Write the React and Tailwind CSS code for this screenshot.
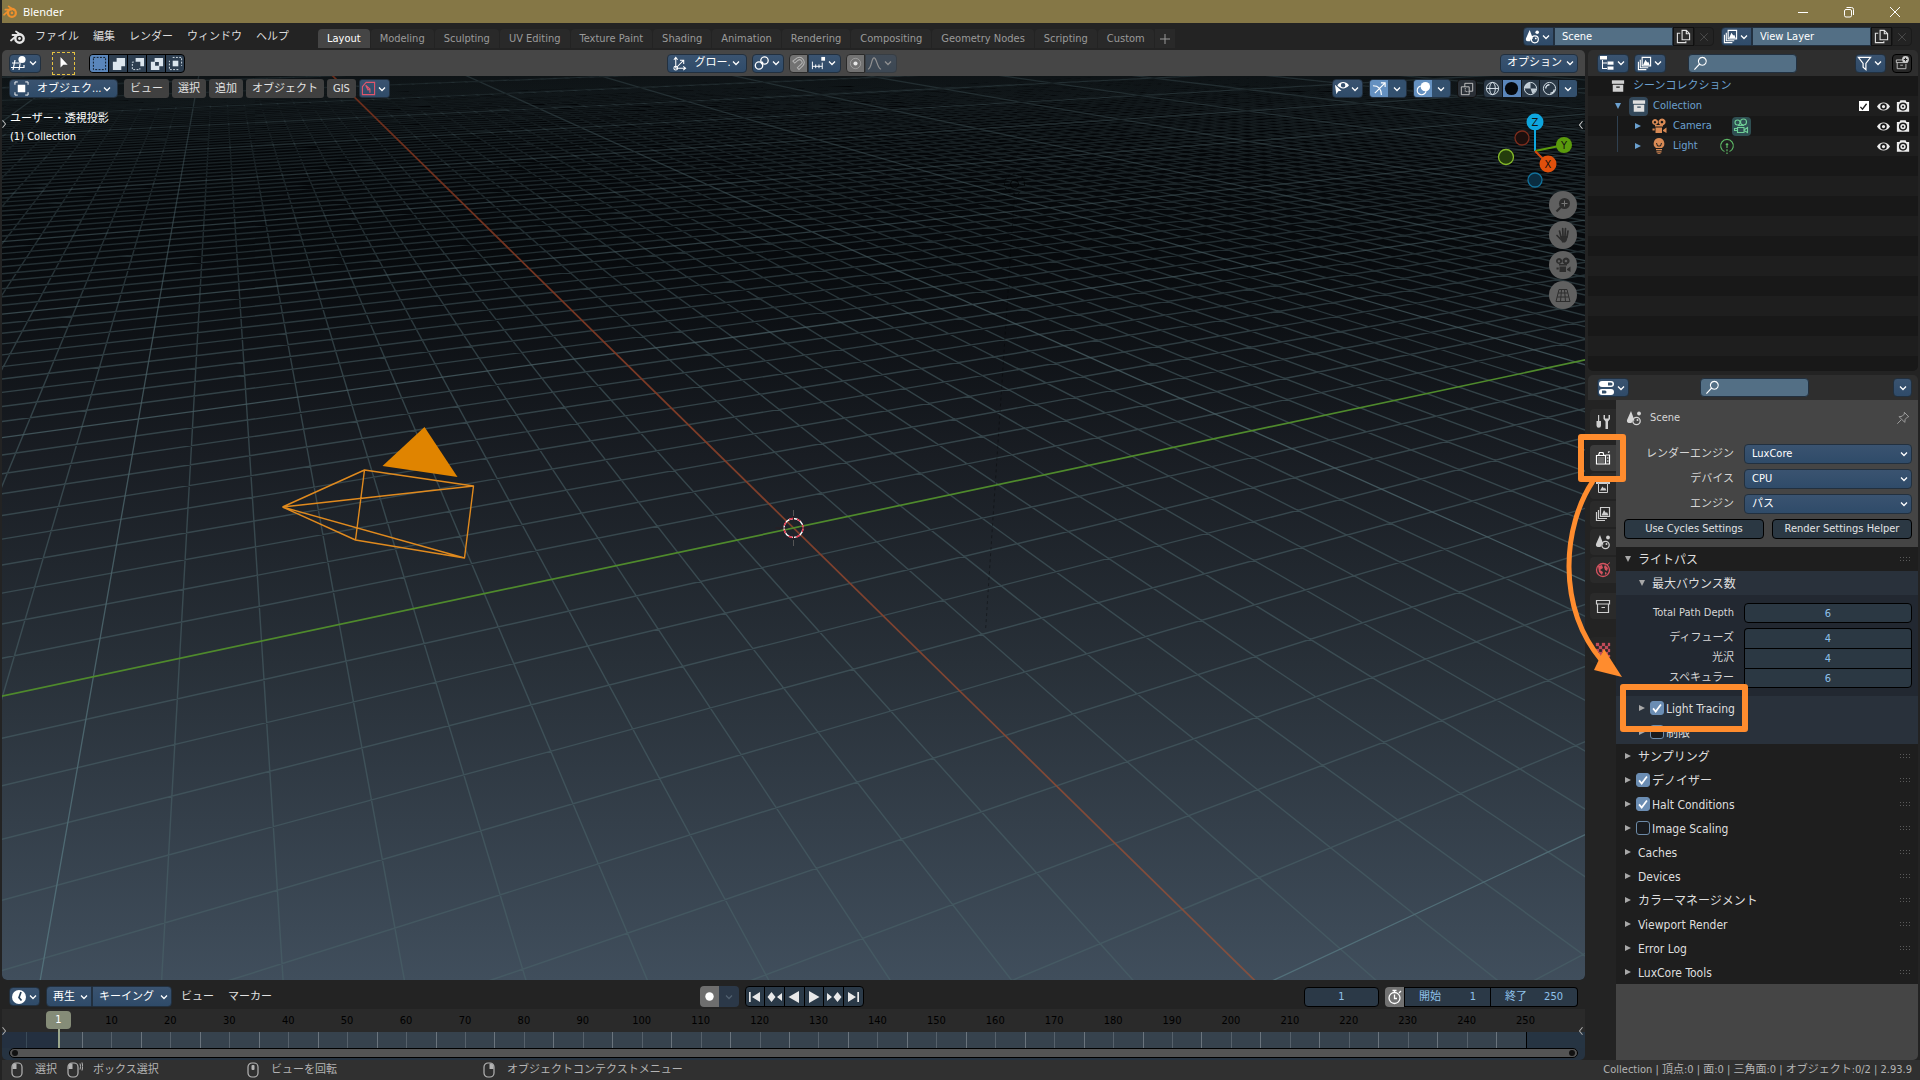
import React from 'react';
import clsx from 'clsx';

const W = 'currentColor';

// 16x16 icon drawings
const icons = {
  blender: (
    <g fill="none" stroke={W}>
      <circle cx="9.5" cy="9.5" r="4.2" strokeWidth="2.4" />
      <circle cx="9.5" cy="9.5" r="1.4" fill={W} stroke="none" />
      <path d="M1 11.5L8.5 5M2.5 6H9M6 2.5l6 4" strokeWidth="1.8" strokeLinecap="round" />
    </g>
  ),
  view3d: (
    <g fill="none" stroke={W}>
      <path d="M1 8h9M0 12.5h13M4 5L2 15M9 9l-1 6M13 10v3" strokeWidth="1.2" />
      <circle cx="11" cy="4.5" r="3.6" fill={W} stroke="none" />
    </g>
  ),
  cursor: <path d="M4 1v12l3.2-3h5z" fill={W} />,
  selNew: <rect x="1.5" y="1.5" width="13" height="13" fill="none" stroke="#0b1420" strokeDasharray="2 1.5" />,
  selAdd: <path d="M6 2h9v9h-4v4H2V6h4z" fill={W} />,
  selSub: (
    <g>
      <path d="M6 2h9v9h-4V6H6z" fill={W} />
      <path d="M4 6.5H2.5v8h8V13" fill="none" stroke={W} strokeDasharray="2 1.5" />
    </g>
  ),
  selDiff: <path fillRule="evenodd" d="M6 2h9v9h-4v4H2V6h4zM6.5 6.5v4h4v-4z" fill={W} />,
  selAnd: (
    <g>
      <rect x="5" y="5" width="6" height="6" fill={W} />
      <path d="M5 1.5h9.500v9M11 14.500H1.500V5" fill="none" stroke={W} strokeDasharray="2 1.5" />
    </g>
  ),
  orient: (
    <g fill="none" stroke={W} strokeWidth="1.1">
      <path d="M4 13V2M2 4l2-2.500L6 4M4 13h10M12 11l2.500 2-2.500 2M5 12l7-7M8.500 4.500H12.500V8.500" />
      <circle cx="4" cy="13" r="2" />
    </g>
  ),
  pivot: (
    <g fill="none" stroke={W} strokeWidth="1.3">
      <circle cx="5" cy="10.500" r="3.700" />
      <circle cx="10.500" cy="5.500" r="3.700" />
      <circle cx="8" cy="8" r="1.4" fill={W} stroke="none" />
    </g>
  ),
  magnet: (
    <path d="M2 5.500l4.500-3.500a5.300 5.300 0 0 1 6 8.500L8.500 14.500 6.800 12.500l3.800-3.500a2.600 2.600 0 0 0-3-4.500L4 7.500z" fill="none" stroke={W} strokeWidth="1.1" />
  ),
  snap: (
    <g>
      <path d="M1.500 6v8M5 9v4M8.500 9v4M12 7v7M1.500 11H12" stroke={W} fill="none" />
      <rect x="11" y="1" width="4" height="4" fill={W} />
    </g>
  ),
  dot: (
    <g>
      <circle cx="8" cy="8" r="5.500" fill="none" stroke={W} opacity=".35" />
      <circle cx="8" cy="8" r="2.200" fill={W} />
    </g>
  ),
  falloff: <path d="M1 14c4 0 3.500-12 6.500-12S11 14 15 14" fill="none" stroke={W} strokeWidth="1.3" />,
  object: (
    <g>
      <rect x="4" y="4" width="8" height="8" fill={W} />
      <path d="M1 4V1h3M12 1h3v3M15 12v3h-3M4 15H1v-3" fill="none" stroke={W} />
    </g>
  ),
  asset: (
    <g fill="none" stroke={W} strokeWidth="1.2">
      <path d="M1.500 6l4-4.500h9v13h-13z" />
      <path d="M5 4.500l4.500 4v4M5 4.500l2.500 5 2-1" />
    </g>
  ),
  visible: (
    <g>
      <path d="M1 4l7 6.500-3.500.3L2.500 14z" fill={W} />
      <path fillRule="evenodd" d="M3.500 4.500C7 0 12.500 0 16 4.500c-3.500 4.500-9 4.500-12.500 0zM9.700 2a2.400 2.400 0 1 0 0 4.800 2.400 2.400 0 0 0 0-4.800z" fill={W} />
    </g>
  ),
  gizmo: (
    <path d="M1 5c6 0 9 4 9 10M3 13L14 2M9.500 2H14v4.500" fill="none" stroke={W} strokeWidth="1.200" />
  ),
  overlay: (
    <g>
      <circle cx="6" cy="10" r="4.700" fill="none" stroke={W} strokeWidth="1.200" />
      <circle cx="10" cy="6" r="5" fill={W} />
    </g>
  ),
  xray: (
    <g fill="none" stroke={W}>
      <path d="M5.500 1.500h9v9M1.500 5.500h9v9h-9zM5.500 1.500v4M14.500 10.500h-4" />
      <path d="M6 7v4h4" strokeDasharray="1.500 1" />
    </g>
  ),
  wire: (
    <g fill="none" stroke={W}>
      <circle cx="8" cy="8" r="6.500" />
      <ellipse cx="8" cy="8" rx="3" ry="6.500" />
      <path d="M1.500 8h13" />
    </g>
  ),
  solid: <circle cx="8" cy="8" r="7" fill="#05080c" />,
  material: (
    <g>
      <circle cx="8" cy="8" r="6.500" fill="none" stroke={W} />
      <path d="M8 1.500V8H14a6 6 0 0 1-4 5.500L8 8 1.500 8A6.500 6.500 0 0 1 8 1.500z" fill={W} opacity=".85" />
    </g>
  ),
  rendered: (
    <g fill="none" stroke={W}>
      <circle cx="8" cy="8" r="6.500" />
      <path d="M4 8a4 4 0 0 1 4-4M9 13c2.500 0 4-2 4-4" strokeWidth="1.500" />
    </g>
  ),
  scene: (
    <g>
      <path d="M5 1l3.500 9.500H6.500L5.500 13H3a2.500 2.500 0 0 1-2-3z" fill={W} />
      <circle cx="10.500" cy="11" r="3.700" fill="none" stroke={W} strokeWidth="1.300" />
      <circle cx="13" cy="3.500" r="1.900" fill={W} />
      <circle cx="11.500" cy="10" r="1" fill={W} />
    </g>
  ),
  copy: <path d="M6.500 1.500H11l3.500 3.500v6.500h-8zM11 1.500V5h3.500M4.500 4.500h-3v10h9v-1.500" fill="none" stroke={W} strokeWidth="1.200" />,
  close: <path d="M3 3l10 10M13 3L3 13" stroke={W} fill="none" />,
  layers: (
    <g>
      <path d="M5.500 1.500h9v9h-9zM3.500 4v8.500H12M1.500 6v8.500H10" fill="none" stroke={W} strokeWidth="1.200" />
      <path d="M6.500 9.500L9 4l2 3 1-1 1.500 3.500z" fill={W} />
    </g>
  ),
  outliner: (
    <g fill={W}>
      <rect x="1" y="1" width="7" height="3.500" />
      <path d="M3 5h1v8h4v1H3zM3 7.500h5v1H3z" />
      <rect x="8.500" y="6.500" width="6" height="3.200" />
      <rect x="8.500" y="11.500" width="6" height="3.200" />
    </g>
  ),
  search: <path d="M10 1.500a4.200 4.200 0 1 1-.1 0zM6.800 8.800L1.500 14.500" fill="none" stroke={W} strokeWidth="1.200" />,
  filter: <path d="M1.500 1.500h13L9.500 8v6.500L6.500 12V8z" fill="none" stroke={W} strokeWidth="1.300" />,
  newCollection: (
    <g fill="none" stroke={W}>
      <path d="M8 4.500H1.500v3H14.500M2.500 7.500v7h10V9M6 10.500h3" />
      <circle cx="12" cy="4" r="3.900" fill={W} stroke="none" />
      <path d="M12 2v4M10 4h4" stroke="#222" strokeWidth="1.200" />
    </g>
  ),
  collection: (
    <g>
      <rect x="1" y="1.500" width="14" height="4" fill={W} />
      <path fillRule="evenodd" d="M2 6.500h12v8H2zM6 8.500v1.500h4V8.500z" fill={W} />
    </g>
  ),
  collectionLine: <path d="M1.500 2.500h13v3.500h-13zM2.500 6v8.500h11V6M6.500 9.500h3.500" fill="none" stroke={W} strokeWidth="1.200" />,
  camera: (
    <g fill={W}>
      <path fillRule="evenodd" d="M4 1a3 3 0 1 0 .1 0zM4 3a1.200 1.200 0 1 1-.1 0zM11 .5a3.500 3.500 0 1 0 .1 0zM11 2.700a1.300 1.300 0 1 1-.1 0z" />
      <path d="M4 7h8v1.500H4zM4.500 9.500H11V15H4.500zM12 12l3.500-2.500V15L12 13z" />
      <rect x="1.500" y="10.500" width="2.200" height="2" />
    </g>
  ),
  cameraLine: (
    <g fill="none" stroke={W} strokeWidth="1.100">
      <circle cx="4.500" cy="4.500" r="2.500" />
      <circle cx="10.500" cy="4" r="3" />
      <path d="M5 7.500h6M4.500 9.500H11v5H4.500zM11 12l3.500-2.500v5L11 12.500M1.500 10.500h3v2h-3z" />
    </g>
  ),
  bulb: (
    <g fill={W}>
      <path d="M8 0a5.500 5.500 0 0 0-3 10h6A5.500 5.500 0 0 0 8 0z" />
      <path d="M5 11h6v1.300H5zM5.500 13.200h5v1.300h-5zM6.500 15.200h3v.8h-3z" />
      <path d="M5.500 5l1 3h3l1-3" stroke="#222" fill="none" />
    </g>
  ),
  pointLight: (
    <g fill="none" stroke={W} strokeWidth="1.200">
      <path d="M5.500 13.500a6.300 6.300 0 1 1 5 0" />
      <circle cx="8" cy="6.500" r="1.300" fill={W} stroke="none" />
      <path d="M8 8v8" strokeDasharray="2 1.300" />
    </g>
  ),
  eye: <path fillRule="evenodd" d="M0 8c3.500-6.500 12.500-6.500 16 0-3.500 6.500-12.500 6.500-16 0zM8 4a4 4 0 1 0 0 8 4 4 0 0 0 0-8zM8 6a2 2 0 1 1 0 4 2 2 0 0 1 0-4z" fill={W} />,
  photo: (
    <g>
      <path fillRule="evenodd" d="M1 3.500h3L5 1.500h6l1 2h3v11H1zM8 4a4.700 4.700 0 1 0 0 9.400A4.700 4.700 0 0 0 8 4z" fill={W} />
      <circle cx="8" cy="8.700" r="3" fill={W} />
      <circle cx="8" cy="8.700" r="1.300" fill="#222" />
    </g>
  ),
  properties: (
    <g>
      <rect x="0" y="1" width="15" height="6" rx="3" fill={W} />
      <rect x="0" y="9" width="15" height="6" rx="3" fill={W} />
      <path d="M9 2.500h3a1.500 1.500 0 0 1 0 3H9zM3 10.500h3a1.500 1.500 0 0 1 0 3H3z" fill="#35506b" />
    </g>
  ),
  tools: (
    <g fill={W}>
      <path d="M3 1h1.200v6H6v4.500a2.200 2.200 0 0 1-4.500 0V7H3z" />
      <path d="M8.500 1v4L10.500 7.500V15h2.500V7.500L15 5V1l-1.500 0v3.500h-3.500V1z" />
    </g>
  ),
  render: (
    <g fill="none" stroke={W} strokeWidth="1.200">
      <path d="M1.500 5.500h9v8.500h-9zM3.500 5.500l1-3h3.500l1 3M10.500 5h4v9h-4" />
      <path d="M3 8h6M3 10h6M3 12h6" opacity=".45" />
      <path d="M12 8h1.500M12 11h1.500M13 2.500l1.500-1" />
    </g>
  ),
  output: (
    <g>
      <path d="M1 2h14v4h-2V5H3v1H1z" fill={W} />
      <path d="M3.500 5.500h9v9h-9z" fill="none" stroke={W} />
      <path d="M5 12.500l2.500-4 1.500 2 1-1 1.500 3z" fill={W} />
    </g>
  ),
  world: (
    <g>
      <circle cx="8" cy="8" r="6.500" fill="none" stroke={W} strokeWidth="1.300" />
      <path d="M3 4l4-1 1 3-3 2 3 2-1 3-3-3zM10 3l3 3-1 3-2-1-1-3zM10 10l2 1-2 2z" fill={W} />
      <path d="M12 3l3-2.500" stroke={W} />
    </g>
  ),
  texture: (
    <path d="M1 1h3v3H1zM7 1h3v3H7zM13 1h2v3h-2zM4 4h3v3H4zM10 4h3v3h-3zM1 7h3v3H1zM7 7h3v3H7zM13 7h2v3h-2zM4 10h3v3H4zM10 10h3v3h-3zM1 13h3v2H1zM7 13h3v2H7zM13 13h2v2h-2z" fill={W} stroke={W} strokeWidth=".3" />
  ),
  pin: <path d="M9.500 1.500l5 5-1.500.5-2.500 2.500-.5 3.500-6.500-6.500L7 6l2.500-2.500zM6 10l-4.500 4.500" fill="none" stroke={W} />,
  clock: (
    <g>
      <circle cx="8" cy="8" r="7" fill={W} />
      <path d="M10 3L8 8.500l2.500 3" fill="none" stroke="#27415c" strokeWidth="1.700" />
    </g>
  ),
  stopwatch: (
    <g fill="none" stroke={W} strokeWidth="1.300">
      <circle cx="7.500" cy="9" r="5.500" />
      <path d="M7.500 5.500V9.500H10M5.500 1.500h4M7.500 1.500v2M12 4l2-2" />
    </g>
  ),
  record: <circle cx="8" cy="8" r="4.500" fill={W} />,
  first: <path d="M2 3h1.700v10H2zM13 3v10L5 8z" fill={W} />,
  prevKey: <path d="M4.500 3l4 5-4 5-4-5zM15 4v8l-5-4z" fill={W} />,
  back: <path d="M13 2v12L2.500 8z" fill={W} />,
  play: <path d="M3 2v12l10.500-6z" fill={W} />,
  nextKey: <path d="M11.500 3l4 5-4 5-4-5zM1 4v8l5-4z" fill={W} />,
  last: <path d="M12.300 3H14v10h-1.700zM3 3v10l8-5z" fill={W} />,
  chevron: <path d="M4 6l4 4 4-4" fill="none" stroke={W} strokeWidth="1.700" />,
  chevronLeft: <path d="M10 3L6 8l4 5" fill="none" stroke={W} strokeWidth="1.400" />,
  chevronRight: <path d="M6 3l4 5-4 5" fill="none" stroke={W} strokeWidth="1.400" />,
  triRight: <path d="M2 2v12l12-6z" fill={W} />,
  triDown: <path d="M2 2h12L8 14z" fill={W} />,
  check: <path d="M3.500 8.500l3 3.500 6-8" fill="none" stroke={W} strokeWidth="2" />,
  zoom: (
    <g>
      <circle cx="9.500" cy="6.500" r="5.500" fill={W} />
      <path d="M6 10l-4.500 4.500" stroke={W} strokeWidth="2.200" />
      <path d="M9.500 3.500v6M6.500 6.500h6" stroke="#777" />
    </g>
  ),
  hand: (
    <g>
      <path d="M5 9h8l-1.500 5-1.500 1.500H7z" fill={W} />
      <path d="M6 10L4.500 4M8 9l-.3-7.500M10 9l.5-7.500M12 10l1-6M6.500 13L2 8.500" stroke={W} strokeWidth="1.700" strokeLinecap="round" fill="none" />
    </g>
  ),
  persp: <path d="M4 2.500h8l3 12H1zM3.200 6h9.600M2.200 10h11.600M6.500 2.500l-1 12M9.500 2.500l1 12" fill="none" stroke={W} />,
  mouseLeft: (
    <g>
      <rect x="3" y="1" width="10" height="14" rx="4" fill="none" stroke={W} strokeWidth="1.200" />
      <path d="M7.500 1.500V7H3.500V4.500a3 3 0 0 1 3-3z" fill={W} />
    </g>
  ),
  mouseDrag: (
    <g>
      <rect x="1" y="1" width="10" height="14" rx="4" fill="none" stroke={W} strokeWidth="1.200" />
      <path d="M5.500 1.500V7H1.500V4.500a3 3 0 0 1 3-3z" fill={W} />
      <path d="M13 1.500q1.200 3 0 6M15 .5q1.500 4 0 8" stroke={W} fill="none" />
    </g>
  ),
  mouseMiddle: (
    <g>
      <rect x="3" y="1" width="10" height="14" rx="4" fill="none" stroke={W} strokeWidth="1.200" />
      <rect x="6.500" y="3" width="3" height="5" rx="1" fill={W} />
    </g>
  ),
  mouseRight: (
    <g>
      <rect x="3" y="1" width="10" height="14" rx="4" fill="none" stroke={W} strokeWidth="1.200" />
      <path d="M8.500 1.500V7h4V4.500a3 3 0 0 0-3-3z" fill={W} />
    </g>
  ),
};

const Icon = ({ name, className = 'size-4' }) => (
  <svg viewBox="0 0 16 16" className={clsx('shrink-0', className)} aria-hidden="true">
    {icons[name]}
  </svg>
);

const blue = 'bg-gradient-to-b from-[#3a5370] to-[#2f4b69] text-white border border-[#22303f]';

// Icon button with a drop-down arrow
const MenuButton = ({ icon, label, className = 'w-8', iconClass = 'size-4' }) => (
  <button aria-label={label} className={clsx('flex h-[19px] items-center justify-center rounded-[4px]', blue, className)}>
    <Icon name={icon} className={iconClass} />
    <Icon name="chevron" className="size-3" />
  </button>
);

const Segment = ({ icon, label, className = 'text-[#dce6ee]', iconClass = 'size-[15px]' }) => (
  <button aria-label={label} className={clsx('flex h-full min-w-0 flex-1 items-center justify-center', className)}>
    <Icon name={icon} className={iconClass} />
  </button>
);

const ToolSelect = ({ id, icon, label, value, className }) => (
  <div className={clsx('flex h-[19px] items-center rounded-[4px] pr-1 pl-1', blue, className)}>
    {icon && <Icon name={icon} className="mr-1 size-[15px]" />}
    <select id={id} aria-label={label} className="min-w-0 flex-1 appearance-none bg-transparent pl-1 leading-4 outline-none">
      <option>{value}</option>
    </select>
    <Icon name="chevron" className="size-3" />
  </div>
);

const SearchBox = ({ id, className }) => (
  <div className={clsx('flex h-[19px] w-[109px] items-center rounded-[4px] border border-[#22303f] bg-[#536f85] pl-1 text-white', className)}>
    <Icon name="search" className="size-[15px]" />
    <input id={id} aria-label="検索" className="w-full min-w-0 bg-transparent px-1 outline-none" />
  </div>
);

const Check = ({ id, checked, label }) => (
  <span className="grid size-[14px] shrink-0 place-items-center">
    <input
      id={id}
      type="checkbox"
      defaultChecked={checked}
      aria-label={label}
      className="peer size-[14px] appearance-none rounded-[3px] border border-[#6d8ba8] bg-[#191b1e] [grid-area:1/1] checked:border-[#6b8db3] checked:bg-[#6b8db3]"
    />
    <Icon name="check" className="pointer-events-none invisible size-[14px] text-white [grid-area:1/1] peer-checked:visible" />
  </span>
);

const tabs = ['Layout', 'Modeling', 'Sculpting', 'UV Editing', 'Texture Paint', 'Shading', 'Animation', 'Rendering', 'Compositing', 'Geometry Nodes', 'Scripting', 'Custom'];

const TitleBar = () => (
  <header className="flex h-[23px] shrink-0 items-center bg-[#857746] pr-[2px] pl-px text-white">
    <Icon name="blender" className="size-[15px] text-[#f0902c]" />
    <h1 className="ml-[5px] flex-1 font-['Noto_Sans'] text-[11px]">Blender</h1>
    <div className="flex">
      <button aria-label="最小化" className="flex w-[46px] justify-center">
        <svg viewBox="0 0 12 12" className="size-3" fill="none" stroke="currentColor"><path d="M1 6.500h10" /></svg>
      </button>
      <button aria-label="元に戻す" className="flex w-[46px] justify-center">
        <svg viewBox="0 0 12 12" className="size-3" fill="none" stroke="currentColor"><rect x="1.500" y="3.500" width="7" height="7.500" rx="1.500" /><path d="M3.500 1.500h5a2 2 0 0 1 2 2V9" /></svg>
      </button>
      <button aria-label="閉じる" className="flex w-[46px] justify-center">
        <svg viewBox="0 0 12 12" className="size-3" fill="none" stroke="currentColor"><path d="M1 1l10 10M11 1L1 11" /></svg>
      </button>
    </div>
  </header>
);

const DataBlock = ({ id, icon, label, value }) => (
  <div className="flex h-[19px] items-stretch">
    <MenuButton icon={icon} label={label} className="w-[31px] rounded-r-none" iconClass="size-[15px]" />
    <input id={id} aria-label={label} defaultValue={value} className="w-[119px] border border-[#22303f] bg-[#536f85] pl-[7px] text-white outline-none" />
    <button aria-label="新規" className="flex w-[21px] items-center justify-center border border-[#101010] bg-[#2a2a2a] text-[#e0e0e0]"><Icon name="copy" className="size-[15px]" /></button>
    <button aria-label="削除" className="flex w-5 items-center justify-center rounded-r-[4px] border border-[#1a1a1a] bg-[#232323] text-[#555]"><Icon name="close" className="size-3" /></button>
  </div>
);

const TopBar = () => (
  <div className="flex h-[27px] shrink-0 items-center pr-2 pl-2">
    <Icon name="blender" className="size-4 text-[#e6e6e6]" />
    <nav className="ml-[9px] flex w-[283px] gap-[14px] text-[#dcdcdc]">
      {['ファイル', '編集', 'レンダー', 'ウィンドウ', 'ヘルプ'].map((m) => (
        <button key={m} className="whitespace-nowrap">{m}</button>
      ))}
    </nav>
    <div role="tablist" className="flex h-[21px] flex-1 items-stretch gap-px self-end">
      {tabs.map((t, i) => (
        <button
          key={t}
          role="tab"
          aria-selected={i === 0}
          className={clsx('mb-[2px] rounded-t-[4px] px-[9px] whitespace-nowrap', i === 0 ? 'bg-[#454545] text-white' : 'bg-[#292929] text-[#9a9a9a]')}
        >
          {t}
        </button>
      ))}
      <button aria-label="ワークスペースを追加" className="mb-[2px] bg-[#292929] px-[5px] text-[#9a9a9a]">
        <svg viewBox="0 0 10 10" className="size-[10px]" stroke="currentColor"><path d="M5 0v10M0 5h10" /></svg>
      </button>
    </div>
    <div className="flex gap-[7px]">
      <DataBlock id="scene" icon="scene" label="シーン" value="Scene" />
      <DataBlock id="layer" icon="layers" label="ビューレイヤー" value="View Layer" />
    </div>
  </div>
);

const ToolHeader = () => (
  <div className="flex h-[26px] shrink-0 items-center rounded-t-[5px] bg-[#464646] px-[7px]">
    <div className="flex flex-1 items-center">
      <MenuButton icon="view3d" label="エディタータイプ" />
      <button aria-label="ボックス選択" className="ml-[11px] flex size-[23px] items-center justify-center border border-dashed border-[#e5c242] text-white">
        <Icon name="cursor" className="size-[14px]" />
      </button>
      <div className="ml-[14px] flex h-[19px] w-24 divide-x divide-black overflow-hidden rounded-[4px] border border-black bg-[#2d3e50]">
        <Segment icon="selNew" label="新規選択" className="bg-[#5a86bb]" />
        <Segment icon="selAdd" label="選択を拡張" />
        <Segment icon="selSub" label="選択を減算" />
        <Segment icon="selDiff" label="選択を反転" />
        <Segment icon="selAnd" label="選択を交差" />
      </div>
    </div>
    <div className="mr-6 flex items-center gap-[5px]">
      <ToolSelect id="orientation" icon="orient" label="座標系" value="グロー..." className="w-20" />
      <MenuButton icon="pivot" label="ピボット" />
      <div className="flex h-[19px] items-center">
        <button aria-label="スナップ" className="flex h-full w-[19px] items-center justify-center rounded-l-[4px] border border-[#2a2a2a] bg-[#727272] text-[#b5b5b5]"><Icon name="magnet" className="size-[15px]" /></button>
        <MenuButton icon="snap" label="スナップ対象" className="w-[33px] rounded-l-none" iconClass="size-[15px]" />
      </div>
      <div className="flex h-[19px] items-center">
        <button aria-label="プロポーショナル編集" className="flex h-full w-[19px] items-center justify-center rounded-l-[4px] border border-[#2a2a2a] bg-[#727272] text-[#e8e8e8]"><Icon name="dot" className="size-[15px]" /></button>
        <div className="opacity-40"><MenuButton icon="falloff" label="減衰" className="w-8 rounded-l-none" iconClass="size-[15px]" /></div>
      </div>
    </div>
    <div className="flex flex-1 justify-end">
      <button className={clsx('flex h-[19px] w-[78px] items-center justify-between rounded-[4px] pr-px pl-[6px] whitespace-nowrap', blue)}>
        オプション
        <Icon name="chevron" className="size-3" />
      </button>
    </div>
  </div>
);

// Perspective view of the ground plane, one line per unit, stronger every ten
const VW = 1584;
const VH = 904;
const FOCAL = 1100;
const DIST = 18;
const CA = 0.4218;
const SA = 0.9067;
const SE = 0.4564;
const CE = 0.8898;
const RANGE = 150;

const project = (x, y) => {
  const depth = DIST + (-SA * x + CA * y) * CE;
  const k = FOCAL / depth;
  const px = VW / 2 + (CA * x + SA * y) * k;
  const py = VH / 2 - (-SA * x + CA * y) * SE * k;
  return `${px.toFixed(1)} ${py.toFixed(1)}`;
};

// nearest allowed coordinate keeps the line in front of the eye
const alongX = (y) => {
  const limit = (DIST - 2 + CA * CE * y) / (SA * CE);
  return limit < -RANGE ? '' : `M${project(-RANGE, y)}L${project(Math.min(RANGE, limit), y)}`;
};
const alongY = (x) => {
  const limit = (2 - DIST + SA * CE * x) / (CA * CE);
  return limit > RANGE ? '' : `M${project(x, Math.max(-RANGE, limit))}L${project(x, RANGE)}`;
};

const range = Array.from({ length: RANGE * 2 + 1 }, (_, i) => i - RANGE);
const minor = range.filter((n) => n % 10 !== 0).map((n) => alongX(n) + alongY(n)).join('');
const major = range.filter((n) => n % 10 === 0 && n !== 0).map((n) => alongX(n) + alongY(n)).join('');

const Scene3D = () => (
  <svg viewBox={`0 0 ${VW} ${VH}`} preserveAspectRatio="xMidYMid slice" className="absolute inset-0 size-full" aria-label="3Dビュー">
    <defs>
      <linearGradient id="sky" x1="0" y1="0" x2="0" y2="1">
        <stop offset="0" stopColor="#020406" />
        <stop offset=".2" stopColor="#070a0d" />
        <stop offset=".42" stopColor="#191d23" />
        <stop offset=".65" stopColor="#283038" />
        <stop offset="1" stopColor="#404e5c" />
      </linearGradient>
      <linearGradient id="minor" gradientUnits="userSpaceOnUse" x1="0" y1="0" x2="0" y2={VH}>
        <stop offset="0" stopColor="#3d5055" stopOpacity=".2" />
        <stop offset=".15" stopColor="#3d5055" stopOpacity=".45" />
        <stop offset=".35" stopColor="#3d5055" stopOpacity=".75" />
        <stop offset="1" stopColor="#475e66" stopOpacity=".75" />
      </linearGradient>
      <linearGradient id="major" gradientUnits="userSpaceOnUse" x1="0" y1="0" x2="0" y2={VH}>
        <stop offset="0" stopColor="#3d5055" stopOpacity=".4" />
        <stop offset=".3" stopColor="#465b60" stopOpacity=".8" />
        <stop offset="1" stopColor="#52707a" />
      </linearGradient>
      <linearGradient id="axis" gradientUnits="userSpaceOnUse" x1="0" y1="0" x2="0" y2={VH}>
        <stop offset="0" stopColor="#6a2c1a" />
        <stop offset=".4" stopColor="#7f3c27" />
        <stop offset="1" stopColor="#83503f" />
      </linearGradient>
    </defs>
    <rect width={VW} height={VH} fill="url(#sky)" />
    <path d={minor} stroke="url(#minor)" strokeWidth="1.400" fill="none" />
    <path d={major} stroke="url(#major)" strokeWidth="1.300" fill="none" />
    <path d={alongX(0)} stroke="url(#axis)" strokeWidth="1.700" fill="none" />
    <path d={alongY(0)} stroke="#4f8a2c" strokeWidth="1.700" fill="none" />
    <path d="M1013 118L984 555" stroke="#000" strokeOpacity=".35" strokeDasharray="3 3" />
    <g fill="none" stroke="#000" strokeOpacity=".7">
      <circle cx="1013" cy="108" r="4" />
      <circle cx="1013" cy="108" r="10" strokeDasharray="2 3" />
    </g>
    <g stroke="#e08a1e" strokeWidth="1.400" fill="none" strokeLinejoin="round">
      <path d="M363 394L472 410L463 482L354 464ZM281 431L363 394M281 431L472 410M281 431L463 482M281 431L354 464" />
      <path d="M423 351L381 390L456 401Z" fill="#e08400" stroke="none" />
    </g>
    <g fill="none">
      <circle cx="792" cy="452" r="9.500" stroke="#fff" strokeWidth="1.400" />
      <circle cx="792" cy="452" r="9.500" stroke="#e0334a" strokeWidth="1.400" strokeDasharray="4 4" />
      <path d="M792 434v12M792 458v12M774 452h12M798 452h12" stroke="#2b1d20" />
      <path d="M792 434v6M792 464v6" stroke="#555" />
    </g>
  </svg>
);

const NavGizmo = () => (
  <svg viewBox="0 0 80 80" className="size-20" fill="none">
    <circle cx="27" cy="27" r="7" stroke="#7c2c1c" strokeWidth="1.300" fill="#1c0f0d" />
    <path d="M40 40V12" stroke="#0ea5dd" strokeWidth="2" />
    <path d="M40 40L69 34" stroke="#5a9a0c" strokeWidth="2" />
    <path d="M40 40l13 13" stroke="#d9480c" strokeWidth="2" />
    <circle cx="11" cy="46" r="7.500" stroke="#86bb2a" strokeWidth="1.300" fill="#243d0c" />
    <circle cx="40" cy="69" r="7" stroke="#12719a" strokeWidth="1.300" fill="#0a2c40" />
    <circle cx="40" cy="11" r="8.500" fill="#0ea5dd" />
    <circle cx="69" cy="34" r="8" fill="#5a9a0c" />
    <circle cx="53" cy="53" r="8.500" fill="#e0500c" />
    <g fontSize="11" fill="#111" textAnchor="middle">
      <text x="40" y="15">Z</text>
      <text x="69" y="38">Y</text>
      <text x="53" y="57">X</text>
    </g>
  </svg>
);

const Viewport = () => (
  <section className="relative min-h-0 flex-1 overflow-hidden rounded-b-[5px] bg-black">
    <Scene3D />
    <div className="relative flex h-full flex-col">
      <div className="flex items-center justify-between px-[7px] pt-[3px]">
        <div className="flex items-center gap-[3px] text-[#e2e2e2]">
          <ToolSelect id="mode" icon="object" label="モード" value="オブジェク..." className="mr-[3px] w-[109px]" />
          {['ビュー', '選択', '追加', 'オブジェクト', 'GIS'].map((m) => (
            <button key={m} className="h-[19px] rounded-[3px] bg-[#404040] px-[6px]">{m}</button>
          ))}
          <button aria-label="アドオン" className={clsx('flex h-[19px] w-[31px] items-center justify-center rounded-[3px]', blue)}>
            <Icon name="asset" className="size-[15px] text-[#e0566c]" />
            <Icon name="chevron" className="size-3" />
          </button>
        </div>
        <div className="flex items-center gap-[6px]">
          <MenuButton icon="visible" label="可視性" className="w-[31px]" iconClass="size-[15px]" />
          {[['gizmo', 'ギズモ'], ['overlay', 'オーバーレイ']].map(([icon, label]) => (
            <div key={icon} className="flex h-[19px] w-[38px] overflow-hidden rounded-[4px] border border-[#22303f] bg-[#32496a] text-white">
              <Segment icon={icon} label={label} className="bg-[#6490c0]" />
              <Segment icon="chevron" label={`${label}の設定`} className="bg-[#33506e]" iconClass="size-3" />
            </div>
          ))}
          <button aria-label="透過表示" className="flex h-[19px] w-5 items-center justify-center rounded-[4px] border border-[#101010] bg-[#2a2f36] text-[#cfcfcf]"><Icon name="xray" className="size-[14px]" /></button>
          <div className="flex h-[19px] w-[95px] divide-x divide-[#10161c] overflow-hidden rounded-[4px] border border-[#10161c] bg-[#2b3947]">
            <Segment icon="wire" label="ワイヤーフレーム" />
            <Segment icon="solid" label="ソリッド" className="bg-[#5a86bb]" />
            <Segment icon="material" label="マテリアル" />
            <Segment icon="rendered" label="レンダー" />
            <Segment icon="chevron" label="シェーディング" className="bg-[#33506e] text-white" iconClass="size-3" />
          </div>
        </div>
      </div>
      <div className="flex justify-between pt-3">
        <div className="flex">
          <Icon name="chevronRight" className="-ml-1 mt-2 size-3 text-[#bbb]" />
          <div className="leading-[18px] text-white">
            <p>ユーザー・透視投影</p>
            <p>(1) Collection</p>
          </div>
        </div>
        <div className="flex items-start pt-px">
          <NavGizmo />
          <Icon name="chevronLeft" className="-mr-[2px] mt-2 size-3 text-[#ccc]" />
        </div>
      </div>
      <div className="flex flex-col items-end gap-[2px] pr-2">
        {[['zoom', 'ズーム'], ['hand', '移動'], ['camera', 'カメラ'], ['persp', '透視投影']].map(([icon, label]) => (
          <button key={icon} aria-label={label} className="flex size-7 items-center justify-center rounded-full bg-[#606060] text-[#2d2d2d]">
            <Icon name={icon} />
          </button>
        ))}
      </div>
    </div>
  </section>
);

const frames = Array.from({ length: 25 }, (_, i) => (i + 1) * 10);

const Timeline = () => (
  <section className="mt-1 flex h-[76px] shrink-0 flex-col">
    <div className="flex h-[25px] items-center px-[7px]">
      <div className="flex flex-1 items-center text-[#e2e2e2]">
        <MenuButton icon="clock" label="タイムライン" className="w-[31px]" />
        <button className={clsx('ml-[6px] flex h-[21px] w-[46px] items-center justify-between rounded-l-[4px] pr-px pl-[6px]', blue)}>再生<Icon name="chevron" className="size-3" /></button>
        <button className={clsx('flex h-[21px] w-20 items-center justify-between rounded-r-[4px] pr-px pl-[6px]', blue)}>キーイング<Icon name="chevron" className="size-3" /></button>
        <button className="ml-[9px]">ビュー</button>
        <button className="ml-[14px]">マーカー</button>
      </div>
      <div className="mr-6 flex items-center gap-[6px]">
        <div className="flex h-[21px] w-[39px] overflow-hidden rounded-[4px]">
          <Segment icon="record" label="自動キー挿入" className="bg-[#6e6e6e] text-white" />
          <Segment icon="chevron" label="キー挿入の設定" className="bg-[#2b3848] text-[#50606f]" iconClass="size-3" />
        </div>
        <div className="flex h-[21px] w-[119px] divide-x divide-black overflow-hidden rounded-[4px] border border-black bg-[#2a3947] text-white">
          {[['first', '最初へ'], ['prevKey', '前のキー'], ['back', '逆再生'], ['play', '再生'], ['nextKey', '次のキー'], ['last', '最後へ']].map(([icon, label]) => (
            <Segment key={icon} icon={icon} label={label} className="text-[#e8e8e8]" iconClass="size-4" />
          ))}
        </div>
      </div>
      <div className="flex flex-1 items-center justify-end text-[#8fc1ea]">
        <input id="frame" aria-label="現在のフレーム" defaultValue="1" className="h-5 w-[75px] rounded-[4px] border border-black bg-[#2b3947] text-center outline-none" />
        <div className="ml-[6px] flex h-5 items-stretch">
          <button aria-label="プレビュー範囲" className="flex w-[19px] items-center justify-center rounded-l-[4px] bg-[#727272] text-white"><Icon name="stopwatch" /></button>
          <div className="flex w-[87px] items-center border border-black bg-[#2b3947] px-[14px]">
            <label htmlFor="start" className="shrink-0">開始</label>
            <input id="start" defaultValue="1" className="w-full min-w-0 bg-transparent text-right outline-none" />
          </div>
          <div className="flex w-[87px] items-center rounded-r-[4px] border border-l-0 border-black bg-[#2b3947] px-[14px]">
            <label htmlFor="end" className="shrink-0">終了</label>
            <input id="end" defaultValue="250" className="w-full min-w-0 bg-transparent text-right outline-none" />
          </div>
        </div>
      </div>
    </div>
    <div className="relative flex flex-1 flex-col overflow-hidden rounded-b-[5px] bg-[#263341]">
      <div className="grid h-[23px] grid-cols-[repeat(25,minmax(0,1fr))] items-center bg-[#2a2a2a] pr-[30px] pl-20 text-center text-black">
        {frames.map((f) => (
          <span key={f}>{f}</span>
        ))}
      </div>
      <div className="flex h-4">
        <div className="flex w-[56px] justify-center bg-[#243040]"><span className="mr-2 w-px bg-[#3a4a58]" /></div>
        <div className="w-6 bg-[#36424d]" />
        <div className="grid flex-1 grid-cols-[repeat(25,minmax(0,1fr))] bg-[#36424d]">
          {frames.map((f) => (
            <div key={f} className={clsx('flex justify-center border-l border-[#6a747d]', f === 250 && 'bg-gradient-to-r from-transparent from-50% to-[#263442] to-50%')}>
              <span className={clsx('w-px', f === 250 ? 'bg-black' : 'bg-[#56616b]')} />
            </div>
          ))}
        </div>
        <div className="w-[30px] bg-[#263442]" />
      </div>
      <div className="mr-[7px] ml-[7px] flex h-[10px] items-center justify-between rounded-full border border-black bg-[#545454] px-[2px]">
        <span className="size-[6px] rounded-full bg-[#111]" />
        <span className="size-[6px] rounded-full bg-[#111]" />
      </div>
      <div className="absolute top-[2px] left-11 flex h-full w-[25px] flex-col items-center">
        <span className="w-full rounded-[4px] bg-[#858c78] text-center leading-[18px] text-white">1</span>
        <span className="h-[19px] w-[2px] bg-[#9aa68c]" />
      </div>
      <Icon name="chevronRight" className="absolute top-4 -left-1 size-3 text-[#aaa]" />
      <Icon name="chevronLeft" className="absolute top-4 -right-[2px] size-3 text-[#aaa]" />
    </div>
  </section>
);

const Toggles = ({ check }) => (
  <div className="ml-auto flex items-center gap-[6px] pr-2 text-[#ececec]">
    {check && <span className="mr-[2px] grid size-[11px] place-items-center">
      <input id="collection-on" type="checkbox" defaultChecked aria-label="Collection を表示" className="size-[10px] appearance-none bg-white [grid-area:1/1]" />
      <Icon name="check" className="pointer-events-none size-[11px] text-[#222] [grid-area:1/1]" />
    </span>}
    <button aria-label="ビューポートで隠す"><Icon name="eye" className="size-[13px]" /></button>
    <button aria-label="レンダーで無効"><Icon name="photo" className="size-[14px]" /></button>
  </div>
);

const Outliner = () => (
  <section className="flex h-[321px] shrink-0 flex-col overflow-hidden rounded-[5px]">
    <div className="flex h-[26px] shrink-0 items-center bg-[#2e2e2e] pr-[6px] pl-[9px]">
      <div className="flex gap-[5px]">
        <MenuButton icon="outliner" label="アウトライナー" />
        <MenuButton icon="layers" label="表示モード" iconClass="size-[15px]" />
      </div>
      <SearchBox id="outliner-search" className="ml-[22px]" />
      <div className="ml-auto flex gap-[6px]">
        <MenuButton icon="filter" label="フィルター" className="w-[31px]" iconClass="size-[15px]" />
        <button aria-label="新規コレクション" className="flex h-[19px] w-5 items-center justify-center rounded-[4px] border border-black bg-[#262626] text-[#ccc]"><Icon name="newCollection" className="size-[14px]" /></button>
      </div>
    </div>
    <ul className="flex-1 overflow-hidden text-[#6ba0cf] [&>li]:flex [&>li]:h-5 [&>li]:items-center [&>li:nth-child(even)]:bg-[#1e1e1e] [&>li:nth-child(odd)]:bg-[#181818]">
      <li className="pl-[23px]">
        <Icon name="collection" className="mr-[8px] size-[14px] text-[#d0d0d0]" />
        シーンコレクション
      </li>
      <li className="pl-[26px]">
        <Icon name="triDown" className="mr-[7px] size-2" />
        <span className="mr-[5px] flex size-[19px] items-center justify-center rounded-[4px] bg-[#33485a]"><Icon name="collection" className="size-[14px] text-[#e0e0e0]" /></span>
        Collection
        <Toggles check />
      </li>
      <li>
        <span className="ml-[29px] h-full w-px bg-[#2f4050]" />
        <Icon name="triRight" className="mr-[9px] ml-4 size-2" />
        <Icon name="camera" className="mr-[6px] size-4 text-[#d98a55]" />
        Camera
        <span className="ml-5 flex size-[19px] items-center justify-center rounded-[4px] bg-[#2f4f52]"><Icon name="cameraLine" className="size-4 text-[#6fce96]" /></span>
        <Toggles />
      </li>
      <li>
        <span className="mb-1 ml-[29px] h-4 w-px bg-[#2f4050]" />
        <Icon name="triRight" className="mr-[9px] ml-4 size-2" />
        <Icon name="bulb" className="mr-[6px] size-4 text-[#d98a55]" />
        Light
        <Icon name="pointLight" className="ml-[21px] size-4 text-[#5db865]" />
        <Toggles />
      </li>
      {Array.from({ length: 11 }, (_, i) => (
        <li key={i} />
      ))}
    </ul>
  </section>
);

const propTabs = [
  { icon: 'tools', label: 'ツール', className: 'mt-[9px] bg-[#2a2a2a] text-[#cfcfcf]' },
  { icon: 'render', label: 'レンダー', className: 'mt-[10px] bg-[#3c3c3c] text-white' },
  { icon: 'output', label: '出力', className: 'mt-[2px] bg-[#2a2a2a] text-[#cfcfcf]' },
  { icon: 'layers', label: 'ビューレイヤー', className: 'mt-[2px] bg-[#2a2a2a] text-[#cfcfcf]' },
  { icon: 'scene', label: 'シーン', className: 'mt-[2px] bg-[#2a2a2a] text-[#cfcfcf]' },
  { icon: 'world', label: 'ワールド', className: 'mt-[2px] bg-[#2a2a2a] text-[#d4525f]' },
  { icon: 'collectionLine', label: 'コレクション', className: 'mt-[10px] bg-[#2a2a2a] text-[#cfcfcf]' },
  { icon: 'texture', label: 'テクスチャ', className: 'mt-[18px] bg-[#262626] text-[#c04a58]' },
];

const SelectRow = ({ id, label, value }) => (
  <div className="flex items-center">
    <label htmlFor={id} className="flex-1 pr-[10px] text-right text-[#d6d6d6]">{label}</label>
    <div className={clsx('flex h-5 w-[168px] items-center rounded-[4px] pr-px', blue)}>
      <select id={id} className="min-w-0 flex-1 appearance-none bg-transparent pl-[7px] outline-none">
        <option>{value}</option>
      </select>
      <Icon name="chevron" className="size-3" />
    </div>
  </div>
);

const NumberRow = ({ id, label, value, className = 'rounded-[4px]' }) => (
  <div className="flex items-center">
    <label htmlFor={id} className="flex-1 pr-[10px] text-right text-[#d6d6d6]">{label}</label>
    <input id={id} defaultValue={value} className={clsx('h-5 w-[168px] border border-black bg-[#2b3843] text-center text-[#8fc1ea] outline-none', className)} />
  </div>
);

const Grip = () => (
  <svg viewBox="0 0 12 6" className="ml-auto h-[6px] w-3 shrink-0 text-[#5a5a5a]" fill="currentColor">
    {[0, 3, 6, 9].map((x) => (
      <path key={x} d={`M${x} 1h1v1h-1zM${x} 4h1v1h-1z`} />
    ))}
  </svg>
);

const PanelHeader = ({ id, title, open, check, checked, sub }) => (
  <div className={clsx('flex h-6 items-center pr-[6px] text-[12px] text-[#dedede]', sub ? 'bg-[#29313b] pl-[22px]' : 'bg-[#1e1e1e] pl-2')}>
    <button aria-label={title} aria-expanded={!!open} className={clsx('text-[#a8a8a8]', check ? 'mr-1' : 'mr-[6px]')}>
      <Icon name={open ? 'triDown' : 'triRight'} className="size-2" />
    </button>
    {check && <Check id={id} checked={checked} label={title} />}
    <span className={clsx('pt-px', check && 'ml-[2px]')}>{title}</span>
    {!sub && <Grip />}
  </div>
);

const Properties = () => (
  <section className="mt-1 flex min-h-0 flex-1 flex-col overflow-hidden rounded-[5px]">
    <div className="flex h-[25px] shrink-0 items-center bg-[#2e2e2e] pr-[6px] pl-[9px]">
      <MenuButton icon="properties" label="プロパティ" />
      <SearchBox id="prop-search" className="ml-[71px]" />
      <button aria-label="オプション" className={clsx('ml-auto flex h-[19px] w-[19px] items-center justify-center rounded-[4px]', blue)}><Icon name="chevron" className="size-3" /></button>
    </div>
    <div className="flex min-h-0 flex-1">
      <div role="tablist" className="flex w-7 shrink-0 flex-col pl-[2px]">
        {propTabs.map((t) => (
          <button key={t.icon} role="tab" aria-label={t.label} className={clsx('flex h-[26px] items-center justify-center rounded-l-[4px]', t.className)}>
            <Icon name={t.icon} />
          </button>
        ))}
      </div>
      <div className="min-w-0 flex-1 bg-[#454545]">
        <div className="flex h-9 items-center pr-2 pl-[10px] text-[#d6d6d6]">
          <Icon name="scene" />
          <span className="ml-2 flex-1">Scene</span>
          <Icon name="pin" className="size-[14px] text-[#a8a8a8]" />
        </div>
        <div className="flex flex-col gap-[5px] px-[6px] pt-2 pb-2">
          <SelectRow id="render-engine" label="レンダーエンジン" value="LuxCore" />
          <SelectRow id="device" label="デバイス" value="CPU" />
          <SelectRow id="engine" label="エンジン" value="パス" />
          <div className="flex gap-2 pl-[2px] text-[#e4e4e4]">
            <button className="h-5 flex-1 rounded-[4px] border border-black bg-[#2b3843] whitespace-nowrap">Use Cycles Settings</button>
            <button className="h-5 flex-1 rounded-[4px] border border-black bg-[#2b3843] whitespace-nowrap">Render Settings Helper</button>
          </div>
        </div>
        <PanelHeader title="ライトパス" open />
        <PanelHeader title="最大バウンス数" open sub />
        <div className="bg-[#222831] px-[6px] pt-2 pb-2">
          <NumberRow id="depth" label="Total Path Depth" value="6" />
          <div className="mt-[5px]">
            <NumberRow id="diffuse" label="ディフューズ" value="4" className="rounded-t-[4px] border-b-0" />
            <NumberRow id="glossy" label="光沢" value="4" className="border-b-0" />
            <NumberRow id="specular" label="スペキュラー" value="6" className="rounded-b-[4px]" />
          </div>
        </div>
        <PanelHeader id="light-tracing" title="Light Tracing" sub check checked />
        <PanelHeader id="clamping" title="制限" sub check />
        <PanelHeader title="サンプリング" />
        <PanelHeader id="denoiser" title="デノイザー" check checked />
        <PanelHeader id="halt" title="Halt Conditions" check checked />
        <PanelHeader id="scaling" title="Image Scaling" check />
        {['Caches', 'Devices', 'カラーマネージメント', 'Viewport Render', 'Error Log', 'LuxCore Tools'].map((t) => (
          <PanelHeader key={t} title={t} />
        ))}
      </div>
    </div>
  </section>
);

const StatusBar = () => (
  <footer className="flex h-5 shrink-0 items-center bg-[#303030] pr-2 pl-[7px] text-[#b4b4b4]">
    <span className="flex w-[58px] items-center gap-[10px]"><Icon name="mouseLeft" />選択</span>
    <span className="flex w-[178px] items-center gap-[10px]"><Icon name="mouseDrag" />ボックス選択</span>
    <span className="flex w-[236px] items-center gap-[10px]"><Icon name="mouseMiddle" />ビューを回転</span>
    <span className="flex items-center gap-[10px]"><Icon name="mouseRight" />オブジェクトコンテクストメニュー</span>
    <span className="ml-auto">Collection | 頂点:0 | 面:0 | 三角面:0 | オブジェクト:0/2 | 2.93.9</span>
  </footer>
);

// Highlight boxes and arrow over the properties editor
const Callouts = () => (
  <svg viewBox="0 0 360 320" className="pointer-events-none absolute top-[421px] right-0 h-80 w-[360px]" fill="none" stroke="#ff8c2e" strokeWidth="6" strokeLinejoin="round">
    <rect x="21" y="16" width="42" height="42" />
    <rect x="63" y="266" width="122" height="42" />
    <path d="M33 60C3 105 -4 185 42 240" strokeWidth="5" />
    <path d="M62 256L44 228L34 249Z" fill="#ff8c2e" stroke="none" />
  </svg>
);

const App = () => (
  <div className="relative flex h-screen min-h-[1060px] flex-col overflow-hidden bg-[#232323] pl-[2px] font-['DejaVu_Sans_Condensed','Noto_Sans_CJK_JP',sans-serif] text-[11px] leading-4">
    <TitleBar />
    <TopBar />
    <main className="flex min-h-0 flex-1 gap-[3px] pr-[2px]">
      <div className="flex min-w-0 flex-1 flex-col">
        <ToolHeader />
        <Viewport />
        <Timeline />
      </div>
      <aside className="flex w-[330px] shrink-0 flex-col">
        <Outliner />
        <Properties />
      </aside>
    </main>
    <StatusBar />
    <Callouts />
  </div>
);

export default App;
